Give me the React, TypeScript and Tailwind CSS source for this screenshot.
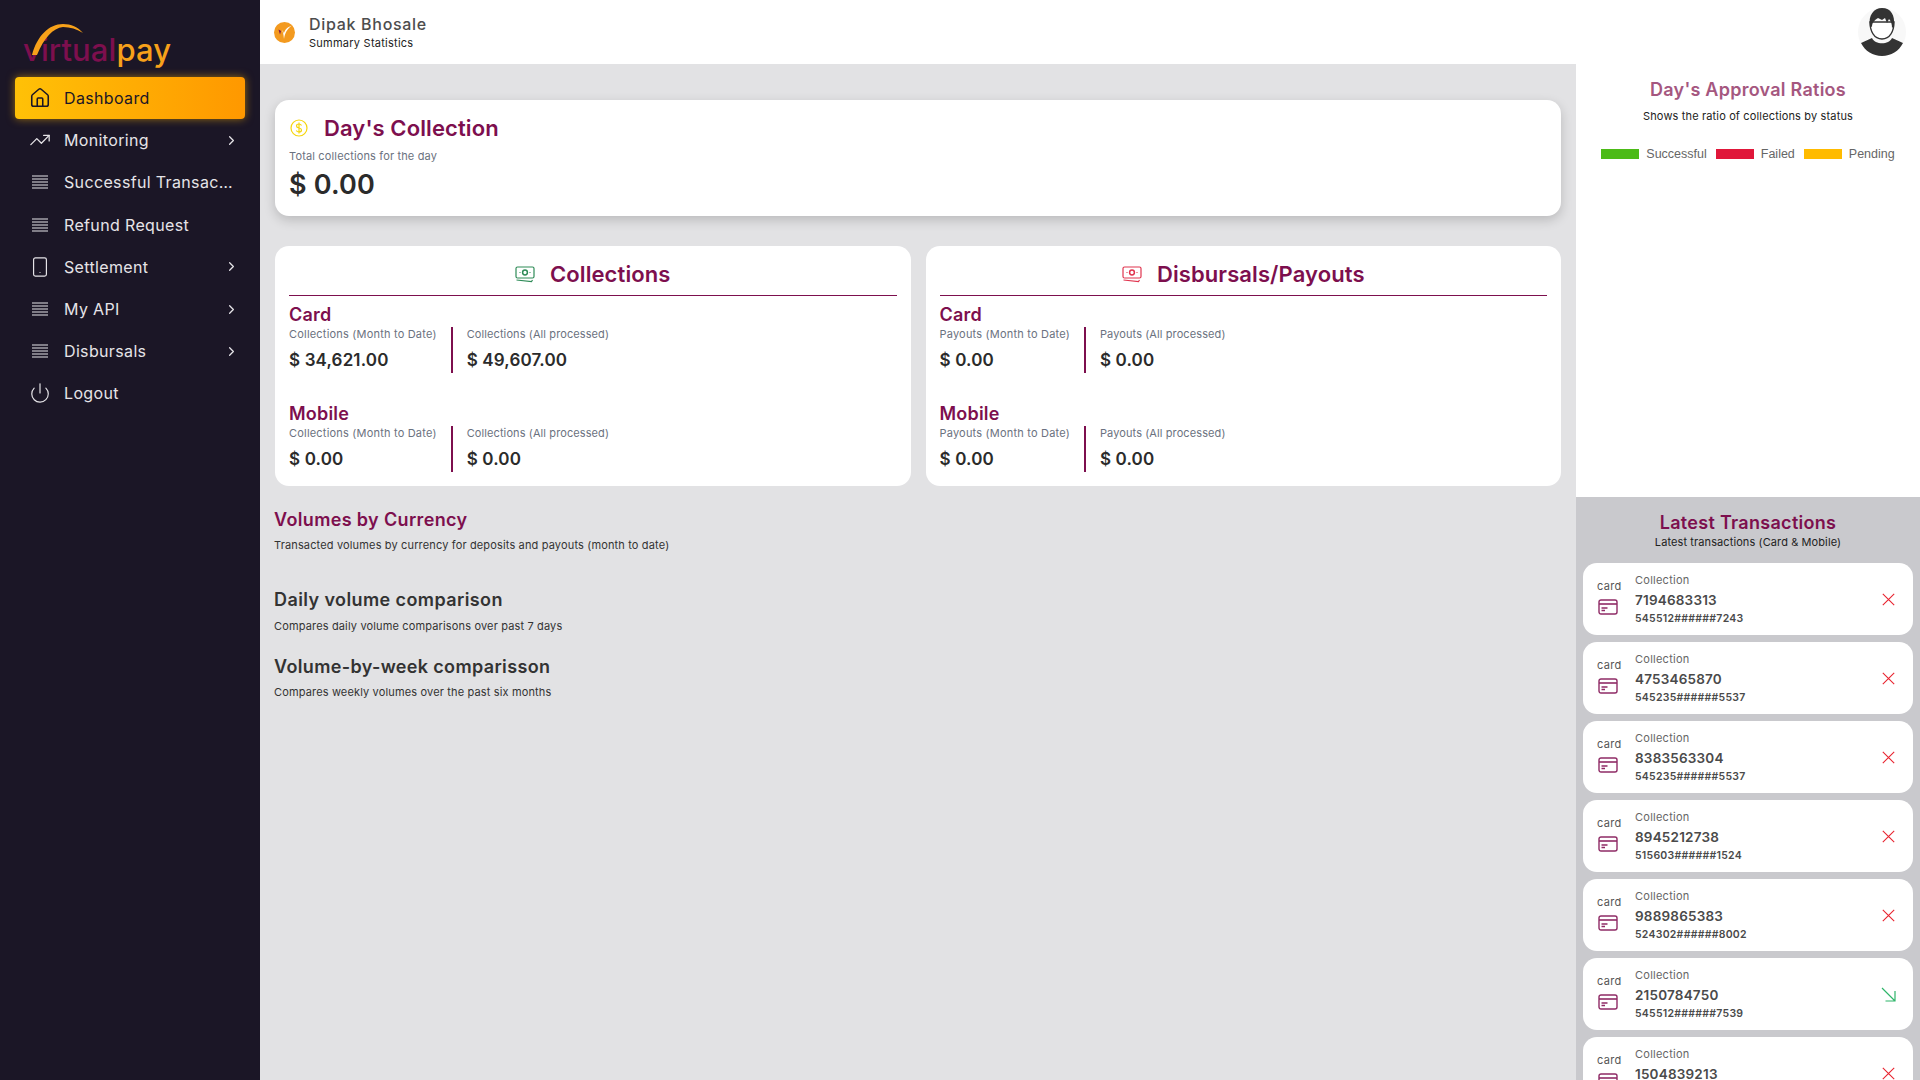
import { ChevronRight, House, Power, Smartphone, TrendingUp } from "lucide-react";

const font = "font-['Inter','Noto_Sans',sans-serif]";

function Lines() {
    return (
        <svg width="18" height="14" viewBox="0 0 18 14" stroke="currentColor" strokeWidth="1.2">
            <path d="M1 1h16M1 4h16M1 7h16M1 10h16M1 13h16" />
        </svg>
    );
}

function Logo() {
    return (
        <div className="relative h-[50px] w-[160px] mt-[24px] ml-[23px]">
            <div className="absolute left-0 top-[6px] text-[31px] leading-[40px] font-medium tracking-[0.1px] whitespace-nowrap">
                <span className="text-[#7d0f4e]">virtual</span>
                <span className="text-[#f7a11a]">pay</span>
            </div>
            <svg className="absolute left-0 top-0" width="64" height="34" viewBox="0 0 64 34" fill="none">
                <path d="M9 31C14 12 26 0 40 0c8 0 15 3 20 9-6-4-13-6-20-6C30 4 21 14 14 31z" fill="#f7a11a" />
            </svg>
        </div>
    );
}

function Banknote({ color }: { color: string }) {
    return (
        <svg width="20" height="17" viewBox="0 0 20 17" fill="none" stroke={color} strokeWidth="1.2">
            <rect x="1" y="1" width="18" height="11" rx="1.5" />
            <circle cx="10" cy="6.5" r="2.4" strokeWidth="1.5" />
            <path d="M4.5 6.5h1M14.5 6.5h1" />
            <path d="M1.5 14l15 1.5 1-1.5" />
        </svg>
    );
}

function NavItem({ icon, label, arrow, active }: { icon: React.ReactNode; label: string; arrow?: boolean; active?: boolean }) {
    return (
        <div
            className={
                active
                    ? "h-[42.2px] mx-[15px] flex items-center rounded-[4px] text-[#1b1626] bg-gradient-to-r from-[#ffc107] to-[#ff9800] shadow-[0_0_8px_rgba(255,180,0,0.55)]"
                    : "h-[42.2px] mx-[15px] flex items-center text-[#e6e4e8]"
            }
        >
            <div className="w-[25px] ml-[12px] flex justify-center">{icon}</div>
            <span className="ml-[12px] max-w-[170px] text-[16px] tracking-[0.35px] truncate">{label}</span>
            {arrow && <ChevronRight size={15} className="ml-auto mr-[6px]" strokeWidth={2} />}
        </div>
    );
}

function Stat({ title, items }: { title: string; items: string[][] }) {
    return (
        <div className="h-[99px]">
            <div className="text-[18px] leading-[22px] font-semibold text-[#7d0f4e] tracking-[0.2px]">{title}</div>
            <div className="flex h-[46px] mt-[1px]">
                <div className="shrink-0 pr-[14px]">
                    <div className="text-[11px] leading-[14px] text-[#6b7280] tracking-[0.2px] whitespace-nowrap">{items[0][0]}</div>
                    <div className="mt-[8px] text-[17px] leading-[22px] font-semibold text-[#2b2b2b] tracking-[0.15px]">{items[0][1]}</div>
                </div>
                <div className="border-l-2 border-[#7d0f4e] pl-[14px]">
                    <div className="text-[11px] leading-[14px] text-[#6b7280] tracking-[0.1px] whitespace-nowrap">{items[1][0]}</div>
                    <div className="mt-[8px] text-[17px] leading-[22px] font-semibold text-[#2b2b2b] tracking-[0.15px]">{items[1][1]}</div>
                </div>
            </div>
        </div>
    );
}

function Panel({ title, icon, word, card, mobile }: { title: string; icon: React.ReactNode; word: string; card: string[]; mobile: string[] }) {
    return (
        <div className="flex-1 h-[240px] bg-white rounded-[14px] px-[14px]">
            <div className="h-[50px] pt-[7px] flex items-center justify-center gap-[15px] border-b border-[#7d0f4e]">
                {icon}
                <span className="text-[22px] font-semibold text-[#7d0f4e] tracking-[0.1px]">{title}</span>
            </div>
            <div className="mt-[8px]">
                <Stat title="Card" items={[[word + " (Month to Date)", card[0]], [word + " (All processed)", card[1]]]} />
                <Stat title="Mobile" items={[[word + " (Month to Date)", mobile[0]], [word + " (All processed)", mobile[1]]]} />
            </div>
        </div>
    );
}

const transactions = [
    ["7194683313", "545512######7243", "x"],
    ["4753465870", "545235######5537", "x"],
    ["8383563304", "545235######5537", "x"],
    ["8945212738", "515603######1524", "x"],
    ["9889865383", "524302######8002", "x"],
    ["2150784750", "545512######7539", "in"],
    ["1504839213", "545512######7243", "x"],
];

function TxRow({ id, pan, status }: { id: string; pan: string; status: string }) {
    return (
        <div className="h-[72px] shrink-0 bg-white rounded-[14px] flex items-center">
            <div className="w-[52px] pl-[14px] text-center shrink-0">
                <div className="text-[11px] leading-[14px] text-[#555] tracking-[0.3px] w-[24px] mt-[-5px]">card</div>
                <svg className="mt-[6px] ml-[1px]" width="20" height="16" viewBox="0 0 20 16" fill="none" stroke="#8f2b66" strokeWidth="1.4">
                    <rect x="1" y="1" width="18" height="14" rx="2" />
                    <path d="M1 5h18" strokeWidth="1.6" />
                    <path d="M3.5 9h6M3.5 11.5h3.5" />
                </svg>
            </div>
            <div className="flex-1">
                <div className="text-[11px] leading-[16px] text-[#666] tracking-[0.25px]">Collection</div>
                <div className="text-[13.5px] leading-[22px] mt-[1px] font-semibold text-[#4a4a4a] tracking-[0.2px]">{id}</div>
                <div className="text-[10.5px] leading-[15px] font-semibold text-[#4a4a4a] tracking-[0.25px]">{pan}</div>
            </div>
            <div className="w-[50px] flex justify-center">
                {status === "x" ? (
                    <svg width="13" height="13" viewBox="0 0 13 13" stroke="#e8232f" strokeWidth="1.1">
                        <path d="M.8.8l11.4 11.4M12.2.8L.8 12.2" />
                    </svg>
                ) : (
                    <svg width="15" height="15" viewBox="0 0 15 15" fill="none" stroke="#2fb56a" strokeWidth="1.2">
                        <path d="M1 1l13 13M4.500 14H14V4" />
                    </svg>
                )}
            </div>
        </div>
    );
}

function Legend({ color, label }: { color: string; label: string }) {
    return (
        <div className="flex items-center gap-[7px]">
            <span className={color + " w-[38px] h-[10px]"} />
            <span className="text-[12.5px] text-[#666] font-['Liberation_Sans',sans-serif]">{label}</span>
        </div>
    );
}

export default function App() {
    return (
        <div className={"flex h-screen w-full overflow-hidden bg-[#e2e2e4] " + font}>
            <aside className="w-[260px] shrink-0 bg-[#1b1626]">
                <Logo />
                <nav className="mt-[3px]">
                    <NavItem active icon={<House size={22} strokeWidth={1.7} />} label="Dashboard" />
                    <NavItem arrow icon={<TrendingUp size={22} strokeWidth={1.4} />} label="Monitoring" />
                    <NavItem icon={<Lines />} label="Successful Transactions" />
                    <NavItem icon={<Lines />} label="Refund Request" />
                    <NavItem arrow icon={<Smartphone size={22} strokeWidth={1.3} />} label="Settlement" />
                    <NavItem arrow icon={<Lines />} label="My API" />
                    <NavItem arrow icon={<Lines />} label="Disbursals" />
                    <NavItem icon={<Power size={22} strokeWidth={1.3} />} label="Logout" />
                </nav>
            </aside>

            <div className="flex-1 flex flex-col min-w-0">
                <header className="h-[64px] shrink-0 bg-white flex items-center pl-[14px] pr-[14px]">
                    <svg width="21" height="21" viewBox="0 0 21 21">
                        <circle cx="10.500" cy="10.500" r="10.500" fill="#f39a1f" />
                        <path d="M8 8c1 2 1.500 4 2 9 1-6 3-10 8-13.500C13 5 11 8 9.800 11.500 9.500 10 9 9 8 8z" fill="#fff" />
                        <path d="M4.500 7.500l1.500 5 1-3.500z" fill="#7d0f4e" />
                    </svg>
                    <div className="ml-[14px]">
                        <div className="text-[16px] leading-[20px] font-medium text-[#4d4d4d] tracking-[0.7px]">Dipak Bhosale</div>
                        <div className="text-[11px] leading-[15px] mt-[2px] text-[#222] tracking-[0.25px]">Summary Statistics</div>
                    </div>
                    <svg className="ml-auto" width="48" height="48" viewBox="0 0 48 48">
                        <circle cx="24" cy="24" r="24" fill="#f8f8f8" />
                        <path d="M3 35l11-5c3 7 17 7 20 0l11 5C41 43 33 48 24 48S7 43 3 35z" fill="#333" />
                        <path d="M12 14c0 9 4 17 12 17s12-8 12-17z" fill="#fff" stroke="#333" strokeWidth="1.3" />
                        <path d="M12 18C10 7 16 0 24 0c9 0 13 7 12 18l-2 2c0-4-1-7-3-9l-2 4-2-5-3 2-4-2c-3 2-6 4-6 9z" fill="#333" />
                    </svg>
                </header>

                <div className="flex-1 flex min-h-0">
                    <main className="flex-1 min-w-0 px-[15px] pt-[36px]">
                        <div className="h-[116px] bg-white rounded-[14px] px-[14px] shadow-[0_4px_12px_rgba(0,0,0,0.18)]">
                            <div className="flex items-center gap-[16px] h-[48px] pt-[8px] pl-[1px]">
                                <svg width="18" height="18" viewBox="0 0 18 18" fill="none" stroke="#f5d50c" strokeWidth="1.2">
                                    <circle cx="9" cy="9" r="8" />
                                    <path d="M11.500 6.500C11 5.500 10 5 9 5c-1.500 0-2.500.8-2.500 2s1 1.700 2.500 2 2.500.8 2.500 2-1 2-2.500 2c-1.200 0-2.200-.5-2.700-1.500M9 3.500v11" />
                                </svg>
                                <span className="text-[22px] font-semibold text-[#7d0f4e] tracking-[0.1px]">Day's Collection</span>
                            </div>
                            <div className="text-[11px] leading-[14px] mt-[1px] text-[#6b7280] tracking-[0.15px]">Total collections for the day</div>
                            <div className="text-[27px] leading-[34px] mt-[5px] font-semibold text-[#2b2b2b] tracking-[0.2px]">$ 0.00</div>
                        </div>

                        <div className="flex gap-[15px] mt-[30px]">
                            <Panel title="Collections" icon={<Banknote color="#2e8b57" />} word="Collections" card={["$ 34,621.00", "$ 49,607.00"]} mobile={["$ 0.00", "$ 0.00"]} />
                            <Panel title="Disbursals/Payouts" icon={<Banknote color="#e0354f" />} word="Payouts" card={["$ 0.00", "$ 0.00"]} mobile={["$ 0.00", "$ 0.00"]} />
                        </div>

                        <div className="mt-[22px] ml-[-1px] text-[18px] leading-[24px] font-semibold text-[#7d0f4e] tracking-[0.35px]">Volumes by Currency</div>
                        <div className="mt-[5px] ml-[-1px] text-[11px] leading-[16px] text-[#333] tracking-[0.15px]">Transacted volumes by currency for deposits and payouts (month to date)</div>
                        <div className="mt-[35px] ml-[-1px] text-[18px] leading-[24px] font-semibold text-[#333] tracking-[0.4px]">Daily volume comparison</div>
                        <div className="mt-[6px] ml-[-1px] text-[11px] leading-[16px] text-[#333] tracking-[0.15px]">Compares daily volume comparisons over past 7 days</div>
                        <div className="mt-[21px] ml-[-1px] text-[18px] leading-[24px] font-semibold text-[#333] tracking-[0.35px]">Volume-by-week comparisson</div>
                        <div className="mt-[5px] ml-[-1px] text-[11px] leading-[16px] text-[#333] tracking-[0.15px]">Compares weekly volumes over the past six months</div>
                    </main>

                    <aside className="w-[344px] shrink-0 flex flex-col overflow-hidden">
                        <div className="h-[433px] shrink-0 bg-white text-center">
                            <div className="pt-[14px] text-[18px] leading-[24px] font-semibold text-[#a5577f] tracking-[0.25px]">Day's Approval Ratios</div>
                            <div className="mt-[6px] text-[11px] leading-[16px] text-[#222] tracking-[0.15px]">Shows the ratio of collections by status</div>
                            <div className="mt-[21px] flex justify-center gap-[9px]">
                                <Legend color="bg-[#4cbb17]" label="Successful" />
                                <Legend color="bg-[#e0173a]" label="Failed" />
                                <Legend color="bg-[#ffbb00]" label="Pending" />
                            </div>
                        </div>
                        <div className="flex-1 min-h-0 bg-[#c9c9cd] px-[7px]">
                            <div className="text-center pt-[14px]">
                                <div className="text-[18px] leading-[24px] font-semibold text-[#7d0f4e] tracking-[0.3px]">Latest Transactions</div>
                                <div className="text-[11px] leading-[14px] text-[#222] tracking-[0.1px]">Latest transactions (Card &amp; Mobile)</div>
                            </div>
                            <div className="mt-[14px] flex flex-col gap-[7px]">
                                {transactions.map((t) => (
                                    <TxRow key={t[0]} id={t[0]} pan={t[1]} status={t[2]} />
                                ))}
                            </div>
                        </div>
                    </aside>
                </div>
            </div>
        </div>
    );
}
